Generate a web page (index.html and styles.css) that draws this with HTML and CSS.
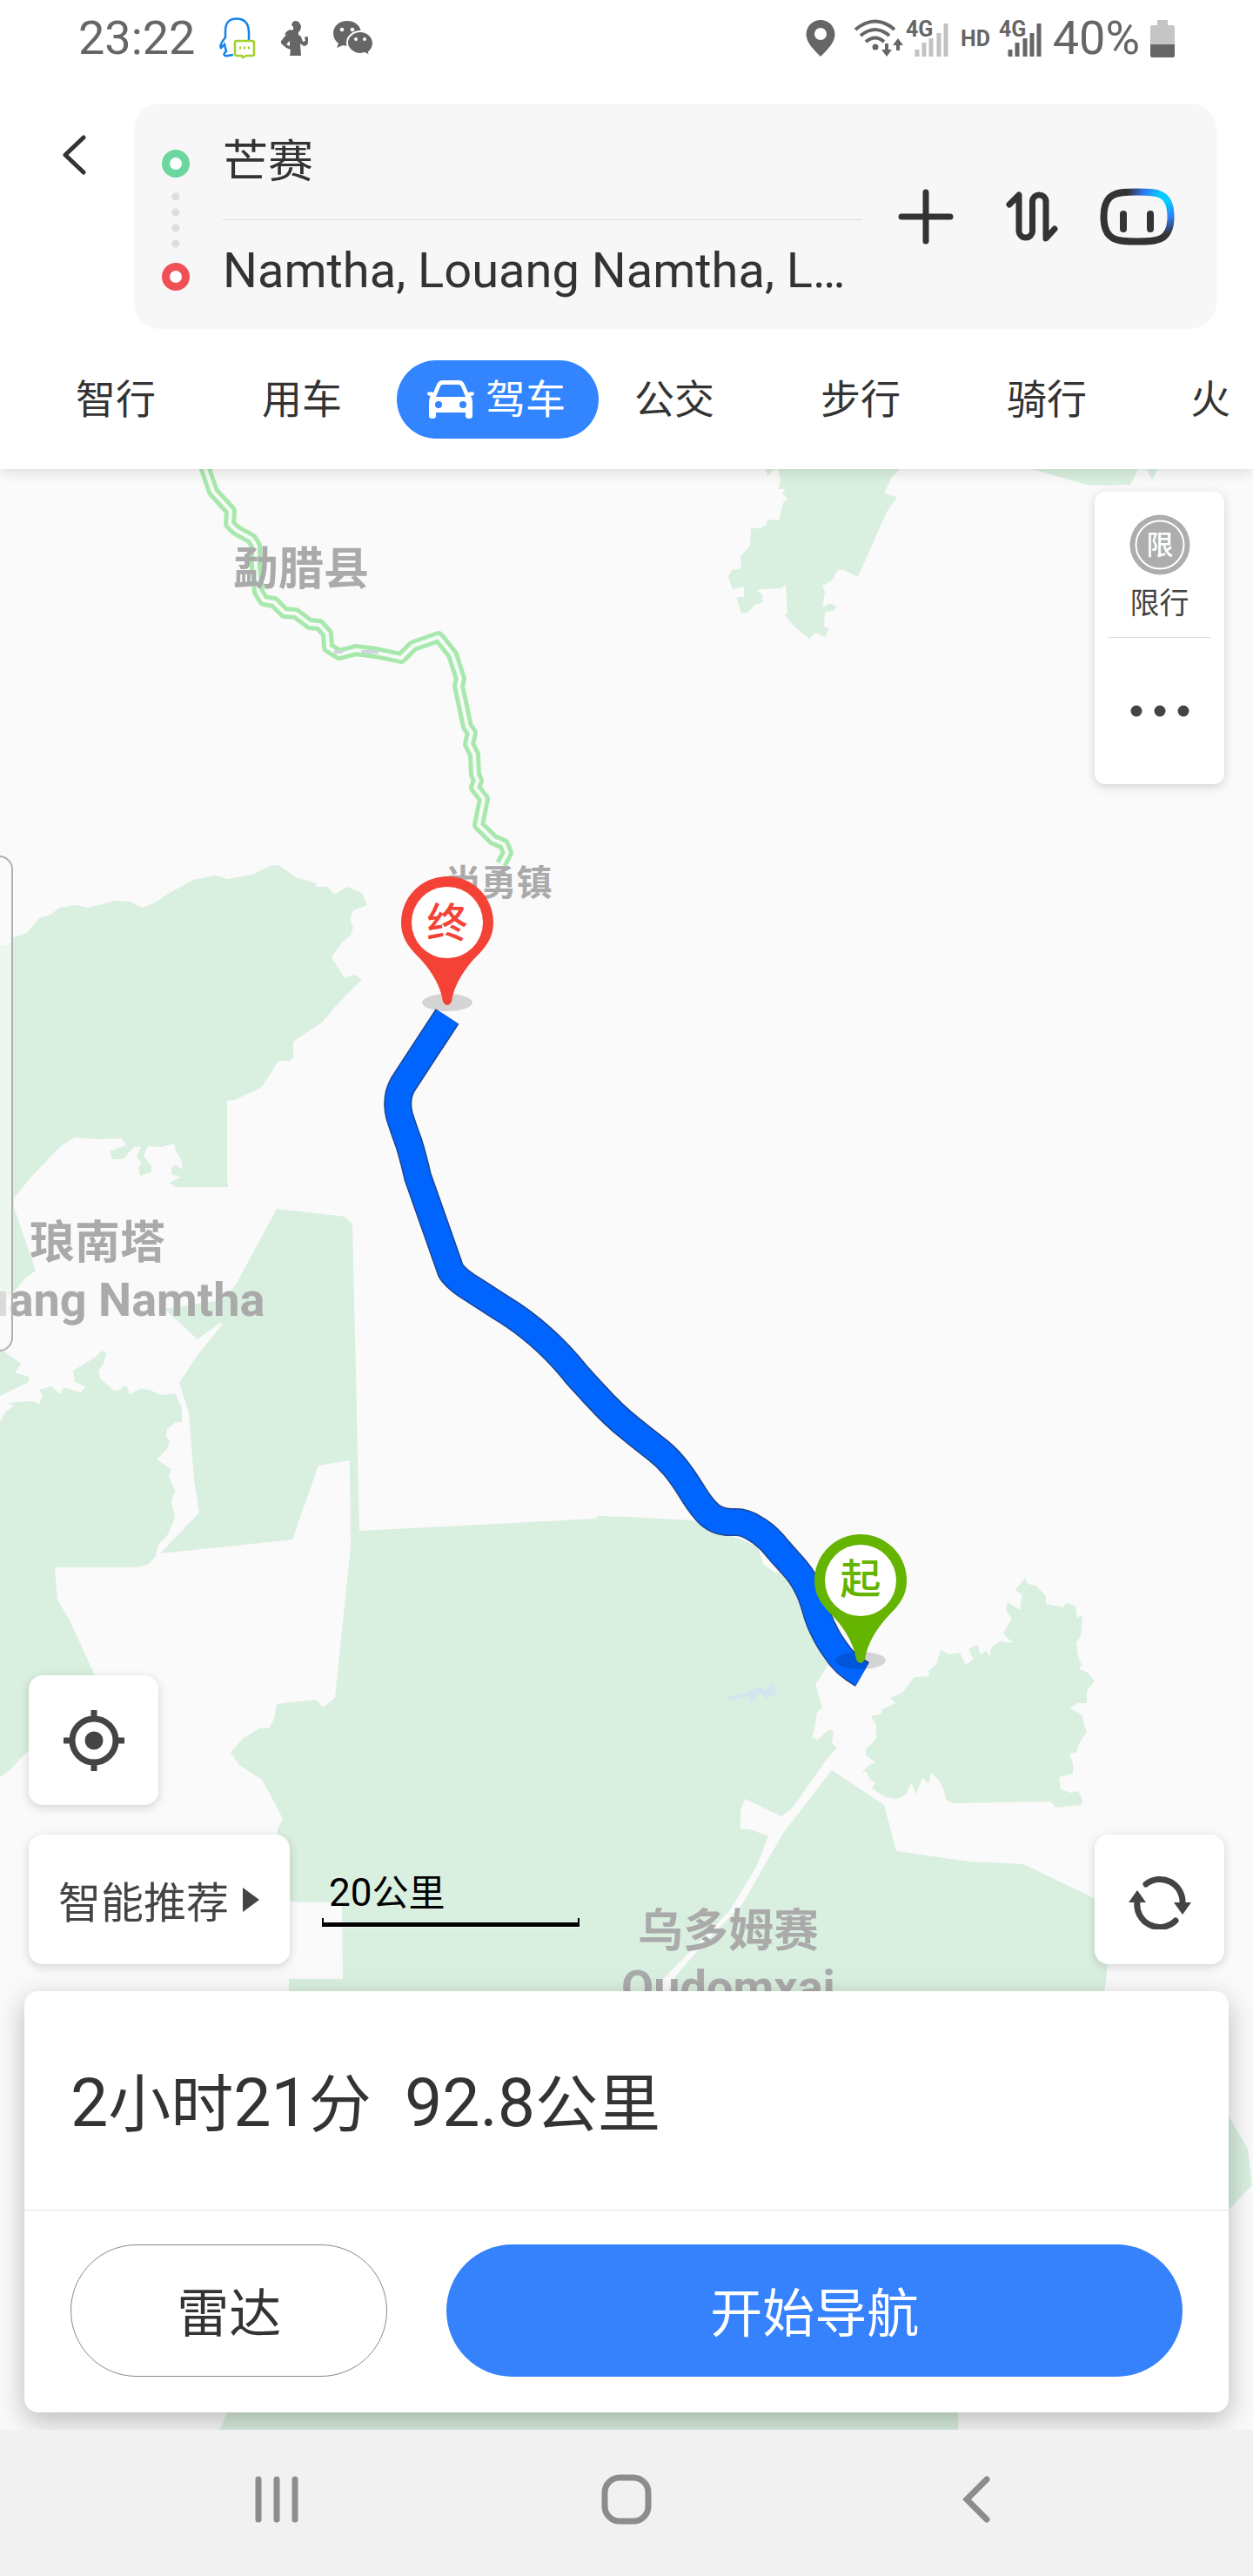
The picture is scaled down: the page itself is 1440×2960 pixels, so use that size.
FILE: index.html
```html
<!DOCTYPE html>
<html lang="zh-CN">
<head>
    <meta charset="UTF-8">
    <meta name="viewport" content="width=device-width, initial-scale=1.0">
    <title>驾车路线</title>
    <link rel="stylesheet" href="styles.css">
</head>
<body>
    <!-- Phone status bar -->
    <div class="status-bar">
        <span class="status-text">23:22</span>
        <svg class="status-app" width="43" height="48" viewBox="0 0 43 48" fill="none">
            <path d="M34 26V18C34 6 29 1.500 20 1.500S7 6 7 16v7C3 28 0 33 2 35l4-4 2 8c-4 3-3 6 2 5l6-1" stroke="#1283ea" stroke-width="2.500"/>
            <path d="M20 27h18q2 0 2 2v13q0 2-2 2h-7l-4 2-1-2h-6q-2 0-2-2V29q0-2 2-2z" fill="#fff" stroke="#a4cf2c" stroke-width="2.500"/>
            <path d="M23 35h2m3 0h2m3 0h2" stroke="#a4cf2c" stroke-width="3"/>
        </svg>
        <svg class="status-app" width="32" height="41" viewBox="0 0 32 41" fill="#666">
            <path d="M12 5q1-5 5-5t6 6q0 5-3 7v3l3 2 2 6 3-1-1-4q3-2 4 0v6q-1 4-5 4l-4-3 1 14H10l1-7-5-2-6-5q-1-2 1-4l8-10 5-2v-3q-2-1-2-5z"/>
            <path d="M11 10l2 2q-1 5-5 3l-4 1q2-5 7-6z"/>
            <path d="M6 27l4-4v6z" fill="#fff"/>
        </svg>
        <svg class="status-app" width="47" height="40" viewBox="0 0 47 40">
            <path d="M16 0C7 0 0 6 0 14c0 5 2 9 6 12l-2 5 7-3c10 3 21-3 21-14C32 6 25 0 16 0z" fill="#666"/>
            <path d="M31 12c-8 0-15 6-15 13s7 13 15 13l5-1 6 3-1-4c3-3 5-6 5-10 0-8-7-14-15-14z" fill="#666" stroke="#fff" stroke-width="2"/>
            <g fill="#fff"><circle cx="10" cy="10" r="2.300"/><circle cx="22" cy="10" r="2.300"/><circle cx="26" cy="21" r="2"/><circle cx="36" cy="21" r="2"/></g>
        </svg>

        <div class="status-right">
            <svg class="status-pin" width="34" height="42" viewBox="0 0 34 42">
                <path fill="#666" fill-rule="evenodd" d="M17 0a16.500 16.500 0 0 1 16.500 16.500C33.500 26 24 35 17 42 10 35 .5 26 .5 16.500A16.500 16.500 0 0 1 17 0zm0 9a7 7 0 1 0 0 14 7 7 0 0 0 0-14z"/>
            </svg>
            <svg class="status-signal" width="110" height="44" viewBox="0 0 110 44">
                <g fill="none" stroke="#666" stroke-width="4">
                    <path d="M1 12Q24-7 46 12"/><path d="M7 19Q24 5 40 19"/><path d="M13 26Q24 17 34 26"/>
                    <path d="M37 28v9M50 36V28"/>
                </g>
                <g fill="#666"><circle cx="24" cy="32" r="3.500"/><path d="M31 35h12l-6 8zM44 30h12l-6-8z"/></g>
                <text class="status-small" x="59" y="20">4G</text>
                <g stroke="#c2c2c2" stroke-width="5"><path d="M72 43V35M80 43V27M88 43V22M97 43V16M105 43V5"/></g>
            </svg>
            <svg class="status-signal" width="94" height="44" viewBox="0 0 94 44">
                <text class="status-small" x="0" y="31">HD</text>
                <text class="status-small" x="44" y="20">4G</text>
                <g stroke="#666" stroke-width="5"><path d="M57 43V35M65 43V27M74 43V22M82 43V16M90 43V5"/></g>
            </svg>
            <span class="status-text">40%</span>
            <svg width="28" height="43" viewBox="0 0 28 43">
                <path fill="#c5c5c5" d="M8 0h12v6h6q2 0 2 2v20H0V8q0-2 2-2h6z"/>
                <path fill="#666" d="M0 28h28v13q0 2-2 2H2q-2 0-2-2z"/>
            </svg>
        </div>
    </div>

    <!-- Route search and travel modes -->
    <header class="header">
        <div class="search-row">
            <button class="icon-button back" type="button" aria-label="返回">
                <svg width="28" height="46" viewBox="0 0 28 46" fill="none" stroke="#333" stroke-width="5" stroke-linecap="round" stroke-linejoin="round"><path d="M25 3 4 23l21 20"/></svg>
            </button>
            <form class="search-card">
                <svg class="route-dots" width="32" height="162" viewBox="0 0 32 162">
                    <circle cx="16" cy="16" r="11.500" fill="#fff" stroke="#6bd69e" stroke-width="9"/>
                    <g fill="#dedede"><circle cx="16" cy="54" r="4.500"/><circle cx="16" cy="72" r="4.500"/><circle cx="16" cy="90" r="4.500"/><circle cx="16" cy="108" r="4.500"/></g>
                    <circle cx="16" cy="146" r="11.500" fill="#fff" stroke="#ef5055" stroke-width="9"/>
                </svg>
                <div class="fields">
                    <input class="field field-from" type="text" aria-label="起点" value="芒赛">
                    <input class="field field-to" type="text" aria-label="终点" value="Namtha, Louang Namtha, L…">
                </div>
                <div class="search-actions">
                    <button class="icon-button add" type="button" aria-label="添加途经点">
                        <svg width="64" height="64" viewBox="0 0 64 64" stroke="#333" stroke-width="7" stroke-linecap="round"><path d="M32 4v56M4 32h56"/></svg>
                    </button>
                    <button class="icon-button" type="button" aria-label="交换起终点">
                        <svg width="62" height="62" viewBox="0 0 62 62" fill="none" stroke="#333" stroke-width="7" stroke-linecap="round" stroke-linejoin="round"><path d="M4 17 15 6v42a7.800 8 0 0 0 15.500 0V13a7.800 8 0 0 1 15.500 0v43l10-11"/></svg>
                    </button>
                    <button class="icon-button" type="button" aria-label="语音助手">
                        <svg width="86" height="66" viewBox="0 0 86 66" fill="none">
                            <defs>
                                <radialGradient id="voice" gradientUnits="userSpaceOnUse" cx="73" cy="12" r="42">
                                    <stop offset="0" stop-color="#06cbff"/><stop offset=".15" stop-color="#06cbff"/><stop offset=".55" stop-color="#2f7bf5"/><stop offset="1" stop-color="#333"/>
                                </radialGradient>
                            </defs>
                            <path d="M43 4.500C66 4.500 81.500 5 81.500 33S66 61.500 43 61.500 4.500 61 4.500 33 20 4.500 43 4.500z" stroke="url(#voice)" stroke-width="8"/>
                            <path d="M27 30v17M58 30v17" stroke="#333" stroke-width="8" stroke-linecap="round"/>
                        </svg>
                    </button>
                </div>
            </form>
        </div>
        <nav class="modes">
            <button class="mode" type="button">智行</button>
            <button class="mode" type="button">用车</button>
            <button class="mode active" type="button">
                <svg width="54" height="44" viewBox="0 0 54 44" fill="#fff">
                    <path fill-rule="evenodd" d="M18 0h18q5 0 7 5l4 9q7-2 7 1 0 3-4 3 2 3 2 7v16q0 3-4 3t-4-3v-4H10v4q0 3-4 3t-4-3V25q0-4 2-7-4 0-4-3 0-3 7-1l4-9q2-5 7-5zm0 5q-2 0-3 2L10 19h34L39 7q-1-2-3-2zM13 24a4 4 0 1 0 0 8 4 4 0 0 0 0-8zm28 0a4 4 0 1 0 0 8 4 4 0 0 0 0-8z"/>
                </svg>
                驾车
            </button>
            <button class="mode" type="button">公交</button>
            <button class="mode" type="button">步行</button>
            <button class="mode" type="button">骑行</button>
            <button class="mode last" type="button">火</button>
        </nav>
    </header>

    <main class="map">
        <svg class="map-canvas" viewBox="0 539 1440 2253" preserveAspectRatio="xMidYMid slice">
            <defs>
                <path id="pin" d="M0-53A53 53 0 0 1 53 0C53 26 34 36 24 50 12 66 7 78 5 91Q0 99-5 91C-7 78-12 66-24 50-34 36-53 26-53 0A53 53 0 0 1 0-53z"/>
                <path id="road" d="M236 530V539L245 565 265 587 264 602 271 609 289 619 294 627 294 653 297 680 303 690 315 692 327 704 340 705 356 717 367 718 376 728 377 744 390 752 409 747 432 750 461 756 475 742 504 732 520 752 529 780 527 788 537 835 542 842 539 855 545 867 546 890 549 897 546 905 556 918 550 948 567 965 579 970 583 980 576 993"/>
                <path id="route" d="M514 1168 463 1246Q454 1262 459 1282 462 1292 470 1314 475 1330 480 1352L518 1460Q524 1470 544 1482L575 1502Q625 1532 663 1580 672 1590 685 1604 707 1628 724 1641 740 1654 753 1664 765 1673 775 1685 784 1696 794 1712 803 1727 811 1736 823 1750 843 1749 855 1748 867 1756 878 1762 888 1773 898 1785 910 1798 921 1810 927 1822 933 1833 937 1848 941 1863 947 1874 952 1885 961 1897 970 1912 991 1924"/>
            </defs>

            <!-- Forest areas -->
            <g fill="#d9efdf">
                <path d="M0 1087 9 1086 16 1077 31 1072 45 1055 56 1052 69 1043 87 1040 101 1043 133 1035 149 1036 164 1043 179 1037 193 1027 222 1011 248 1006 261 1010 290 1005 310 995 320 994 340 1008 363 1015 364 1019 377 1019 384 1028 399 1019 416 1026 422 1040 406 1046 402 1057 406 1065 403 1075 393 1083 388 1090 381 1100 396 1124 407 1120 416 1125 386 1156 371 1174 337 1197 337 1215 333 1219 320 1219 301 1249 270 1264 261 1265 261 1355 262 1364 201 1364 195 1359 208 1353 197 1349 197 1342 201 1338 210 1344 208 1332 202 1322 200 1314 185 1318 170 1317 165 1328 174 1340 174 1347 161 1351 159 1342 163 1336 157 1330 162 1318 154 1318 141 1332 129 1332 126 1323 145 1316 140 1308 112 1309 86 1307 70 1317 37 1351 16 1377 16 1387 41 1460 30 1468 16 1484 0 1500z"/>
                <path d="M0 1549 12 1558 24 1567 17 1577 33 1582 33 1588 21 1594 0 1604z"/>
                <path d="M0 1634 6 1623 16 1615 8 1612 39 1610 45 1614 49 1603 45 1597 59 1593 69 1602 73 1594 93 1600 98 1593 86 1588 84 1575 99 1566 110 1559 117 1552 122 1555 119 1567 113 1575 115 1584 131 1598 139 1597 140 1593 146 1593 149 1602 161 1596 172 1597 185 1603 201 1601 209 1617 209 1634 202 1634 192 1642 191 1650 195 1657 192 1665 180 1677 197 1688 194 1697 201 1713 197 1725 201 1744 193 1763 182 1775 179 1788 171 1797 157 1801 63 1801 66 1838 79 1860 109 1925 109 1990 32 2012 10 2035 0 2042z"/>
                <path d="M318 1389 397 1398 405 1407 409 1580 412 1717 413 1759 686 1745 687 1742 720 1743 796 1747 871 1777 877 1797 890 1807 920 1807 952 1912 937 1936 945 1962 939 1967 937 1983 933 1997 940 1999 953 1987 958 1990 956 2003 962 2008 949 2023 911 2077 898 2087 856 2067 851 2080 851 2101 865 2103 883 2110 869 2145 839 2195 789 2247 761 2275 748 2300 332 2300 332 2274 394 2274 393 2186 319 2185 319 2102 325 2090 309 2059 301 2045 275 2028 265 2014 280 1997 298 1986 309 1986 315 1975 318 1958 363 1953 371 1962 385 1951 403 1777 402 1678 366 1684 336 1769 184 1785 229 1738 223 1700 217 1623 206 1589 225 1560 256 1521 253 1520 227 1539 189 1504 255 1494 271 1476z"/>
                <path d="M956 2034 1016 2074 1030 2127 1113 2139 1176 2142 1257 2181 1275 2200 1273 2257 1268 2300 762 2300 777 2270 803 2240 853 2188 901 2105z"/>
                <path d="M1178 1813 1181 1820 1191 1822 1202 1834 1202 1843 1222 1847 1225 1842 1236 1845 1238 1860 1242 1855 1244 1862 1242 1880 1237 1888 1239 1903 1243 1913 1240 1918 1250 1922 1258 1932 1249 1943 1249 1957 1239 1957 1229 1963 1243 1970 1246 1982 1249 1990 1241 2002 1237 2013 1229 2016 1233 2027 1233 2038 1217 2042 1219 2056 1230 2060 1239 2058 1244 2068 1243 2074 1214 2077 1207 2070 1094 2072 1087 2068 1085 2058 1080 2047 1070 2037 1067 2050 1060 2042 1053 2062 1047 2048 1041 2062 1032 2067 1018 2065 1002 2055 1006 2048 1000 2045 995 2035 990 2037 998 2029 1006 2025 995 2017 995 2010 1007 1998 1007 1982 1001 1972 1012 1970 1014 1964 1029 1957 1023 1951 1037 1945 1051 1927 1068 1926 1067 1920 1076 1912 1081 1896 1090 1901 1103 1899 1110 1913 1119 1907 1113 1895 1123 1890 1127 1902 1133 1897 1138 1903 1139 1893 1149 1886 1164 1888 1153 1877 1163 1860 1156 1850 1158 1841 1172 1850 1175 1833 1167 1827z"/>
                <path d="M880 539 882 547 888 540 894 539 897 552 894 562 903 562 899 567 905 573 900 578 895 598 882 597 881 603 874 607 863 607 862 627 851 639 852 653 841 655 837 663 842 677 855 674 855 686 846 686 852 704 859 704 868 695 877 692 876 683 869 679 876 677 896 676 903 672 905 703 902 707 913 720 930 734 937 727 948 732 953 722 947 720 948 703 959 702 961 697 954 693 945 698 948 680 945 673 956 667 963 655 970 655 986 663 1019 588 1030 573 1030 571 1016 567 1025 548 1034 539z"/>
                <path d="M1186 539 1253 558 1299 557 1308 539zM1318 539 1324 552 1330 539z"/>
                <path d="M1412 2432 1434 2469 1439 2511 1412 2539zM272 2752 252 2792H1101V2752z"/>
            </g>
            <path fill="#d5e4f1" d="M837 1950 858 1945 874 1937 878 1942 890 1935 891 1945 900 1954 888 1946 881 1952 874 1945 862 1957 860 1948 838 1955z"/>

            <!-- Highway -->
            <g fill="none" stroke-linejoin="round">
                <use href="#road" stroke="#a9e8ad" stroke-width="14"/>
                <use href="#road" stroke="#f7fbf7" stroke-width="4"/>
                <path stroke="#cfd5de" stroke-width="4" d="M384 749h10M415 749h20"/>
            </g>

            <!-- Place names -->
            <g class="place">
                <text x="346" y="672">勐腊县</text>
                <text class="place-small" x="573" y="1029">尚勇镇</text>
                <text x="112" y="1446">琅南塔</text>
                <text class="place-latin" x="112" y="1512">Louang Namtha</text>
                <text x="837" y="2237">乌多姆赛</text>
                <text class="place-latin" x="837" y="2302">Oudomxai</text>
            </g>

            <!-- Driving route -->
            <g fill="none" stroke-linejoin="round">
                <use href="#route" stroke="#1d4590" stroke-width="32"/>
                <use href="#route" stroke="#0065ff" stroke-width="29"/>
            </g>

            <g class="pin pin-end" transform="translate(514 1060)">
                <ellipse cx="0" cy="92" rx="29" ry="10" fill="#000" fill-opacity=".15"/>
                <use href="#pin"/>
                <circle r="41" fill="#fff"/>
                <text y="17">终</text>
            </g>
            <g class="pin pin-start" transform="translate(989 1816)">
                <ellipse cx="0" cy="92" rx="29" ry="10" fill="#000" fill-opacity=".15"/>
                <use href="#pin"/>
                <circle r="41" fill="#fff"/>
                <text y="15">起</text>
            </g>
        </svg>

        <div class="drawer-handle"></div>

        <div class="map-panel">
            <button class="panel-button limit" type="button">
                <svg width="70" height="70" viewBox="0 0 70 70">
                    <circle cx="35" cy="35" r="34.500" fill="#adadad"/>
                    <circle cx="35" cy="35" r="27.500" fill="none" stroke="#fff" stroke-width="2"/>
                    <text class="limit-sign" x="35" y="46">限</text>
                </svg>
                限行
            </button>
            <button class="panel-button more" type="button" aria-label="更多">
                <svg width="68" height="14" viewBox="0 0 68 14" fill="#444"><circle cx="7" cy="7" r="6.500"/><circle cx="34" cy="7" r="6.500"/><circle cx="61" cy="7" r="6.500"/></svg>
            </button>
        </div>

        <div class="map-bottom">
            <button class="map-button" type="button" aria-label="定位">
                <svg width="72" height="72" viewBox="0 0 72 72" fill="none" stroke="#444" stroke-width="7">
                    <circle cx="36" cy="36" r="25"/>
                    <path d="M36 1v10M36 61v10M1 36h10M61 36h10"/>
                    <circle cx="36" cy="36" r="10.500" fill="#444" stroke="none"/>
                </svg>
            </button>
            <div class="map-tools">
                <button class="map-button prefer" type="button">
                    智能推荐
                    <svg width="20" height="28" viewBox="0 0 20 28" fill="#444"><path d="M0 0 19 14 0 28z"/></svg>
                </button>
                <div class="scale">
                    <span class="scale-text"><span class="scale-num">20</span>公里</span>
                    <span class="scale-bar"></span>
                </div>
                <button class="map-button refresh" type="button" aria-label="刷新">
                    <svg width="72" height="68" viewBox="0 -6 72 68" fill="none" stroke="#444" stroke-width="7" stroke-linecap="round">
                        <path d="M20 10A26 26 0 0 1 62 32"/><path d="M54 52A26 26 0 0 1 10 30"/>
                        <g fill="#444" stroke="none"><path d="M52 31h20L62 45zM0 31h20L10 17z"/></g>
                    </svg>
                </button>
            </div>

            <!-- Trip summary -->
            <section class="sheet">
                <h1 class="trip">
                    <span><span class="trip-num">2</span>小时<span class="trip-num">21</span>分</span>
                    <span><span class="trip-num">92.8</span>公里</span>
                </h1>
                <div class="sheet-actions">
                    <button class="action radar" type="button">雷达</button>
                    <button class="action start" type="button">开始导航</button>
                </div>
            </section>
        </div>
    </main>

    <!-- System navigation -->
    <nav class="system-nav">
        <button class="icon-button" type="button" aria-label="最近任务">
            <svg width="50" height="54" viewBox="0 0 50 54" stroke="#8c8c8c" stroke-width="7" stroke-linecap="round"><path d="M4 4v46M25 4v46M46 4v46"/></svg>
        </button>
        <button class="icon-button" type="button" aria-label="主屏幕">
            <svg width="58" height="58" viewBox="0 0 58 58" fill="none" stroke="#8c8c8c" stroke-width="7"><rect x="4" y="4" width="50" height="50" rx="17"/></svg>
        </button>
        <button class="icon-button" type="button" aria-label="返回上一页">
            <svg width="32" height="54" viewBox="0 0 32 54" fill="none" stroke="#8c8c8c" stroke-width="7" stroke-linecap="round"><path d="M28 4 5 27l23 23"/></svg>
        </button>
    </nav>
</body>
</html>
```
FILE: styles.css
```css
* {
    box-sizing: border-box;
}
body {
    font-family: Roboto, "Noto Sans CJK SC", sans-serif;
    margin: 0;
    min-height: 100vh;
    display: flex;
    flex-direction: column;
    background-color: #fff;
    color: #333;
}
button {
    font-family: inherit;
    color: inherit;
    margin: 0;
    padding: 0;
    border: none;
    background: none;
    cursor: pointer;
}
svg {
    display: block;
    flex: none;
}
.icon-button {
    display: flex;
    align-items: center;
    justify-content: center;
}

/* Status bar */
.status-bar {
    position: relative;
    z-index: 3;
    display: flex;
    align-items: center;
    gap: 28px;
    height: 88px;
    padding: 0 90px;
    background-color: #fff;
}
.status-text {
    font-size: 54px;
    line-height: 64px;
    color: #666;
}
.status-right {
    display: flex;
    align-items: center;
    gap: 12px;
    margin-left: auto;
}
.status-pin {
    margin-right: 10px;
}
.status-signal {
    overflow: visible;
}
.status-small {
    font-size: 25px;
    font-weight: 700;
    fill: #666;
}

/* Header */
.header {
    position: relative;
    z-index: 2;
    padding-top: 31px;
    background-color: #fff;
    box-shadow: 0 2px 16px rgba(0, 0, 0, 0.14);
}
.search-row {
    display: flex;
    align-items: flex-start;
    padding-right: 42px;
}
.back {
    width: 154px;
    height: 118px;
    padding-left: 16px;
}
.search-card {
    display: flex;
    flex: 1;
    height: 259px;
    padding: 0 48px 0 32px;
    border-radius: 30px;
    background-color: #f7f7f7;
}
.route-dots {
    margin-top: 53px;
}
.fields {
    display: flex;
    flex: 1;
    flex-direction: column;
    min-width: 0;
    margin-left: 38px;
    padding-bottom: 10px;
}
.field {
    width: 100%;
    padding: 0;
    border: none;
    outline: none;
    background: none;
    font-family: inherit;
    color: #333;
    text-overflow: ellipsis;
}
.field-from {
    height: 134px;
    padding-bottom: 8px;
    border-bottom: 1px solid #dcdcdc;
    font-size: 52px;
}
.field-to {
    flex: 1;
    font-size: 56px;
}
.search-actions {
    display: flex;
    align-items: center;
    gap: 46px;
    margin-left: 42px;
}
.add {
    justify-content: flex-start;
    width: 78px;
}

/* Travel modes */
.modes {
    display: grid;
    grid-auto-flow: column;
    grid-auto-columns: 214px;
    align-items: center;
    height: 161px;
    padding-left: 26px;
    overflow: hidden;
}
.mode {
    font-size: 46px;
    line-height: 90px;
    white-space: nowrap;
}
.mode.active {
    display: flex;
    justify-self: start;
    align-items: center;
    gap: 13px;
    margin-left: 2px;
    padding: 0 38px 0 35px;
    border-radius: 45px;
    background-color: #3385ff;
    color: #fff;
}
.mode.last {
    justify-self: start;
    padding-left: 58px;
}

/* Map */
.map {
    position: relative;
    display: flex;
    flex: 1;
    flex-direction: column;
    overflow: hidden;
    background-color: #fafafa;
}
.map-canvas {
    position: absolute;
    inset: 0;
    width: 100%;
    height: 100%;
}
.place {
    font-size: 52px;
    font-weight: 700;
    fill: #aaa;
    text-anchor: middle;
}
.place-small {
    font-size: 41px;
}
.place-latin {
    font-size: 54px;
}
.pin text {
    font-size: 47px;
    font-weight: 500;
    text-anchor: middle;
}
.pin-end {
    fill: #f44336;
}
.pin-start {
    fill: #64b400;
}
.drawer-handle {
    position: absolute;
    top: 444px;
    left: -20px;
    width: 35px;
    height: 570px;
    border: 2px solid #b0b0b0;
    border-radius: 16px;
    background-color: rgba(250, 250, 250, 0.6);
}
.map-panel {
    position: relative;
    display: flex;
    flex-direction: column;
    align-self: flex-end;
    width: 149px;
    margin: 26px 33px 0;
    padding: 0 16px;
    border-radius: 12px;
    background-color: #fff;
    box-shadow: 0 3px 12px rgba(0, 0, 0, 0.16);
}
.panel-button {
    display: flex;
    flex-direction: column;
    align-items: center;
    height: 168px;
    color: #444;
}
.limit {
    padding-top: 26px;
    border-bottom: 1px solid #ddd;
    gap: 8px;
    font-size: 34px;
    line-height: 48px;
}
.limit-sign {
    font-size: 31px;
    font-weight: 500;
    fill: #fff;
    text-anchor: middle;
}
.more {
    justify-content: center;
}
.map-bottom {
    position: relative;
    display: flex;
    flex-direction: column;
    margin-top: auto;
    padding: 0 28px 20px;
}
.map-button {
    display: flex;
    align-items: center;
    justify-content: center;
    width: 149px;
    height: 149px;
    margin-left: 5px;
    border-radius: 16px;
    background-color: #fff;
    box-shadow: 0 3px 12px rgba(0, 0, 0, 0.16);
    color: #444;
}
.map-tools {
    display: flex;
    align-items: center;
    margin: 34px 0 31px;
}
.map-button.prefer {
    gap: 16px;
    width: 300px;
    font-size: 49px;
}
.map-button.refresh {
    margin: 0 5px 0 auto;
}
.scale {
    display: flex;
    flex-direction: column;
    margin-left: 37px;
    padding-bottom: 4px;
}
.scale-text {
    padding-left: 8px;
    font-size: 42px;
    line-height: 56px;
    color: #000;
}
.scale-num {
    font-size: 44px;
}
.scale-bar {
    width: 296px;
    height: 10px;
    border: 2px solid #000;
    border-width: 0 2px 5px;
    box-shadow: 0 1px 2px #fff;
}

/* Bottom sheet */
.sheet {
    border-radius: 16px;
    background-color: #fff;
    box-shadow: 0 10px 32px rgba(0, 0, 0, 0.26);
}
.trip {
    display: flex;
    align-items: center;
    gap: 38px;
    height: 252px;
    margin: 0;
    padding: 0 53px 4px;
    border-bottom: 1px solid #e5e5e5;
    font-size: 72px;
    font-weight: 400;
}
.trip-num {
    font-size: 77px;
}
.sheet-actions {
    display: flex;
    gap: 68px;
    padding: 39px 53px 41px;
}
.action {
    flex: 3 1 0;
    height: 152px;
    padding-bottom: 4px;
    border-radius: 76px;
    font-size: 60px;
}
.radar {
    border: 1px solid #888;
}
.start {
    flex-grow: 7;
    background-color: #3681fc;
    color: #fff;
}

/* System navigation */
.system-nav {
    display: grid;
    grid-template-columns: repeat(3, 1fr);
    height: 168px;
    padding: 0 117px 8px;
    background-color: #f1f1f1;
}
```
